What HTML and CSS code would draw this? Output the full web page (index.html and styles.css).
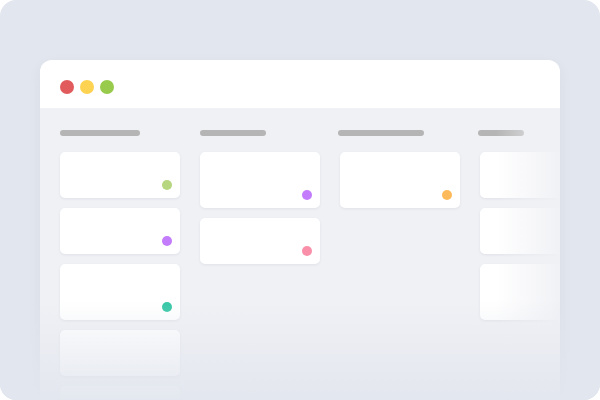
FILE: index.html
```html
<!DOCTYPE html>
<html>
<head>
<meta charset="utf-8">
<link rel="stylesheet" href="styles.css">
</head>
<body>
<div class="frame">
  <div class="window">
    <div class="titlebar">
      <span class="light red"></span>
      <span class="light yellow"></span>
      <span class="light green"></span>
    </div>
    <div class="board">
      <div class="column">
        <div class="bar w80"></div>
        <div class="card"><span class="tag lime"></span></div>
        <div class="card"><span class="tag purple"></span></div>
        <div class="card tall"><span class="tag teal"></span></div>
        <div class="card"></div>
        <div class="card"></div>
      </div>
      <div class="column">
        <div class="bar w66"></div>
        <div class="card tall"><span class="tag purple"></span></div>
        <div class="card"><span class="tag pink"></span></div>
      </div>
      <div class="column">
        <div class="bar w86 shift"></div>
        <div class="card tall"><span class="tag orange"></span></div>
      </div>
      <div class="column">
        <div class="bar w46 shift"></div>
        <div class="card"></div>
        <div class="card"></div>
        <div class="card tall"></div>
      </div>
    </div>
    <div class="fade-right"></div>
  </div>
  <div class="fade-bottom"></div>
</div>
</body>
</html>
```

FILE: styles.css
```css
html, body {
  margin: 0;
  padding: 0;
  background: #ffffff;
}

.frame {
  position: relative;
  width: 600px;
  height: 400px;
  box-sizing: border-box;
  padding: 60px 40px 0;
  background: #e2e6ee;
  border-radius: 16px;
  overflow: hidden;
}

.window {
  position: relative;
  height: 360px;
  background: #f0f1f5;
  border-radius: 12px 12px 0 0;
  overflow: hidden;
  box-shadow: 0 4px 14px rgba(60, 70, 100, 0.05);
}

.titlebar {
  display: flex;
  gap: 6px;
  height: 48px;
  box-sizing: border-box;
  padding: 20px 0 0 20px;
  background: #ffffff;
}

.light {
  width: 14px;
  height: 14px;
  border-radius: 50%;
}
.light.red { background: #e15b5c; }
.light.yellow { background: #fdd351; }
.light.green { background: #98cb4b; }

.board {
  display: flex;
  gap: 20px;
  padding: 22px 0 0 20px;
}

.column {
  display: flex;
  flex-direction: column;
  gap: 10px;
  width: 120px;
  flex-shrink: 0;
}

.bar {
  height: 6px;
  border-radius: 3px;
  background: #b5b5b5;
  margin-bottom: 6px;
}
.bar.shift { margin-left: -2px; }
.w80 { width: 80px; }
.w66 { width: 66px; }
.w86 { width: 86px; }
.w46 { width: 46px; }

.card {
  display: flex;
  align-items: flex-end;
  justify-content: flex-end;
  height: 46px;
  box-sizing: border-box;
  padding: 8px;
  background: #ffffff;
  border-radius: 5px;
  box-shadow: 0 1px 3px rgba(40, 50, 80, 0.08);
}
.card.tall { height: 56px; }

.tag {
  width: 10px;
  height: 10px;
  border-radius: 50%;
}
.tag.lime { background: #b6d67f; }
.tag.purple { background: #c27cfc; }
.tag.teal { background: #34c7a5; }
.tag.pink { background: #fa8fa9; }
.tag.orange { background: #fdba5b; }

.fade-right {
  position: absolute;
  top: 48px;
  right: 0;
  bottom: 0;
  width: 64px;
  background: linear-gradient(to right, rgba(240, 241, 245, 0), rgba(240, 241, 245, 0.97));
}

.fade-bottom {
  position: absolute;
  left: 0;
  right: 0;
  bottom: 0;
  height: 100px;
  background: linear-gradient(to bottom, rgba(226, 230, 238, 0), rgba(226, 230, 238, 0.95));
}
```
